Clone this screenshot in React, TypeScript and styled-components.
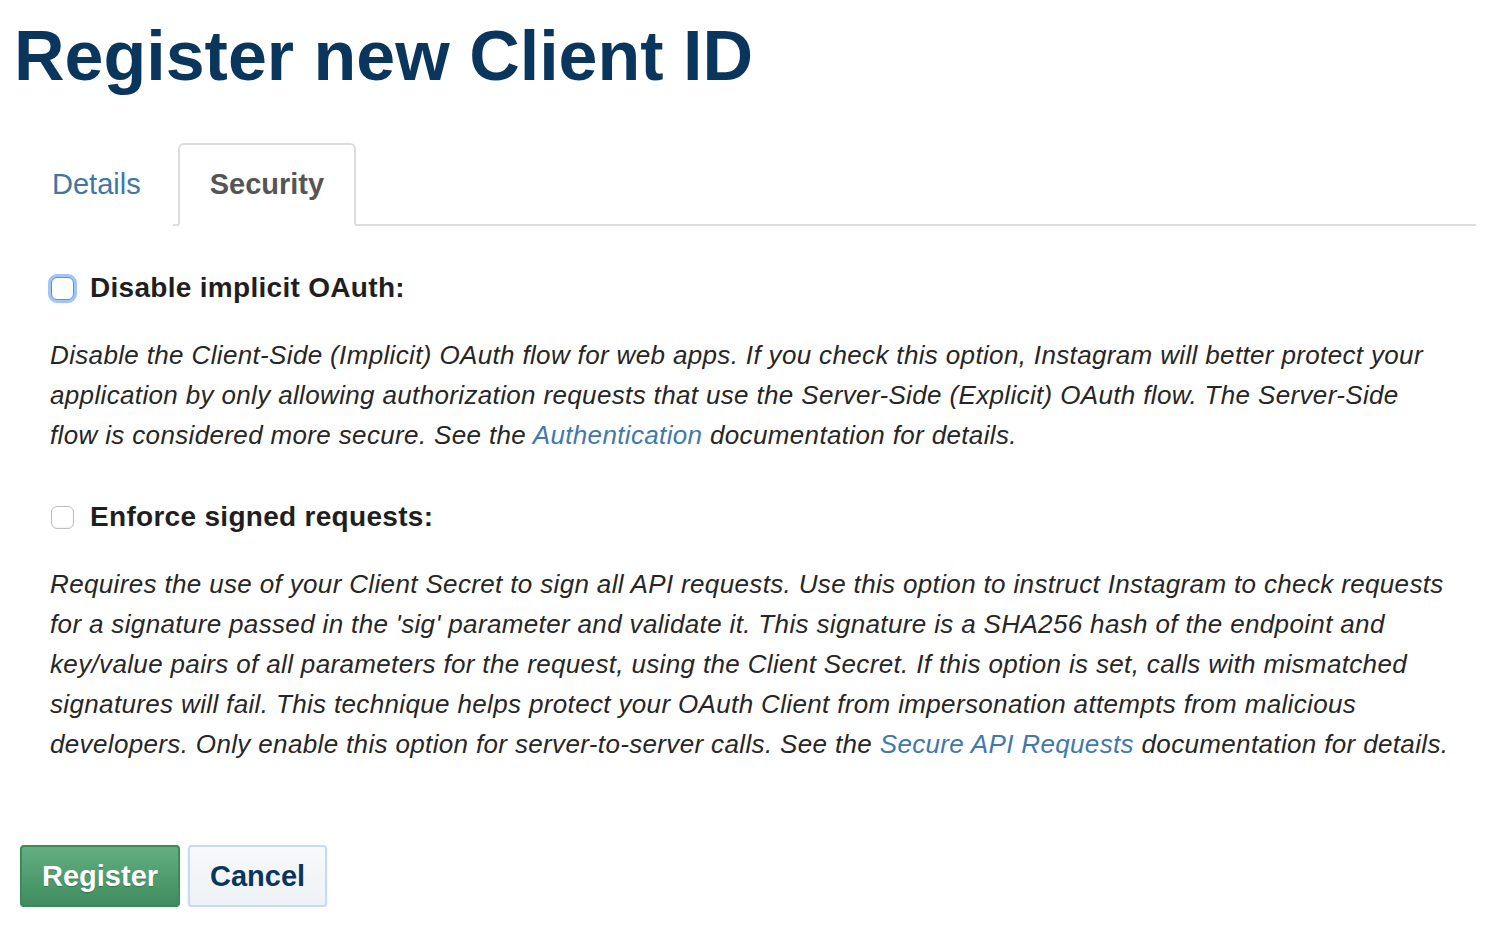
import React from "react";
import styled, { createGlobalStyle } from "styled-components";

const Global = createGlobalStyle`
  html, body { margin: 0; padding: 0; background: #fff; }
  body { font-family: "Liberation Sans", Arial, sans-serif; color: #222; }
`;

const Page = styled.div`
  padding: 14px 30px 0 20px;
`;

const Title = styled.h1`
  margin: 0 0 0 -6px;
  font-size: 70px;
  font-weight: 700;
  color: #0a365e;
  letter-spacing: 0px;
  line-height: 84px;
`;

const TabBar = styled.div`
  display: flex;
  gap: 5px;
  margin-top: 45px;
  border-bottom: 2px solid #dcdcdc;
`;

const Tab = styled.div<{ $active?: boolean }>`
  height: 83px;
  padding: 0 30px;
  display: flex;
  align-items: center;
  font-size: 29px;
  box-sizing: border-box;
  margin-bottom: -2px;
  border: 2px solid ${(p) => (p.$active ? "#dcdcdc" : "transparent")};
  border-bottom-color: ${(p) => (p.$active ? "#fff" : "transparent")};
  border-radius: 6px 6px 0 0;
  font-weight: ${(p) => (p.$active ? 700 : 400)};
  color: ${(p) => (p.$active ? "#555" : "#3f76a8")};
  background: #fff;
`;

const Section = styled.div<{ $gap: number }>`
  padding-left: 30px;
  margin-top: ${(p) => p.$gap}px;
`;

const Option = styled.label`
  display: flex;
  align-items: center;
  gap: 16px;
  font-size: 28px;
  letter-spacing: 0.3px;
  font-weight: 700;
  color: #1f1f1f;
  height: 40px;
`;

const Box = styled.span<{ $focus?: boolean }>`
  width: 23px;
  height: 23px;
  border-radius: 6px;
  box-sizing: border-box;
  border: 1.5px solid ${(p) => (p.$focus ? "#5b8fe2" : "#bdbdbd")};
  box-shadow: ${(p) =>
    p.$focus ? "0 0 0 3px #a3c4f6" : "inset 0 -1px 2px rgba(0,0,0,0.06)"};
  background: #fff;
  margin-left: 1px;
`;

const Desc = styled.p`
  margin: 27px 0 0 0;
  font-size: 26px;
  letter-spacing: 0.35px;
  font-style: italic;
  line-height: 40px;
  color: #262626;
`;

const Link = styled.a`
  color: #3f78ad;
  text-decoration: none;
`;

const Buttons = styled.div`
  display: flex;
  gap: 8px;
  margin-top: 81px;
`;

const Button = styled.button<{ $primary?: boolean }>`
  height: 62px;
  padding: 0 20px;
  font-family: "Liberation Sans", Arial, sans-serif;
  font-size: 29px;
  font-weight: 700;
  border-radius: 4px;
  border: 2px solid ${(p) => (p.$primary ? "#3a8a5a" : "#c6dbef")};
  color: ${(p) => (p.$primary ? "#fff" : "#0a365e")};
  background: ${(p) =>
    p.$primary
      ? "linear-gradient(#64ae82, #3f8d5e)"
      : "linear-gradient(#f7f9fb, #eef2f6)"};
  text-shadow: ${(p) => (p.$primary ? "0 1px 1px rgba(0,0,0,0.25)" : "none")};
  box-shadow: 0 1px 2px rgba(0, 0, 0, 0.12);
`;

export default function App() {
  return (
    <Page>
      <Global />
      <Title>Register new Client ID</Title>
      <TabBar>
        <Tab>Details</Tab>
        <Tab $active>Security</Tab>
      </TabBar>
      <Section $gap={42}>
        <Option>
          <Box $focus />
          Disable implicit OAuth:
        </Option>
        <Desc>
          Disable the Client-Side (Implicit) OAuth flow for web apps. If you check this option, Instagram will better protect your
          <br />
          application by only allowing authorization requests that use the Server-Side (Explicit) OAuth flow. The Server-Side
          <br />
          flow is considered more secure. See the <Link href="#">Authentication</Link> documentation for details.
        </Desc>
      </Section>
      <Section $gap={42}>
        <Option>
          <Box />
          Enforce signed requests:
        </Option>
        <Desc>
          Requires the use of your Client Secret to sign all API requests. Use this option to instruct Instagram to check requests
          <br />
          for a signature passed in the 'sig' parameter and validate it. This signature is a SHA256 hash of the endpoint and
          <br />
          key/value pairs of all parameters for the request, using the Client Secret. If this option is set, calls with mismatched
          <br />
          signatures will fail. This technique helps protect your OAuth Client from impersonation attempts from malicious
          <br />
          developers. Only enable this option for server-to-server calls. See the <Link href="#">Secure API Requests</Link> documentation for details.
        </Desc>
      </Section>
      <Buttons>
        <Button $primary>Register</Button>
        <Button>Cancel</Button>
      </Buttons>
    </Page>
  );
}
